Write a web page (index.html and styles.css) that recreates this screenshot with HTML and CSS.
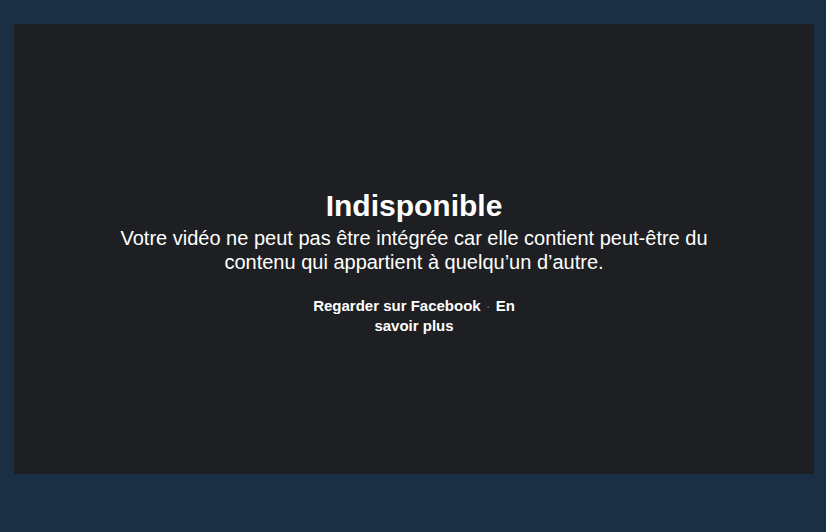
FILE: index.html
```html
<!DOCTYPE html>
<html lang="fr">
<head>
  <meta charset="UTF-8">
  <meta name="viewport" content="width=device-width, initial-scale=1.0">
  <title>Indisponible</title>
  <link rel="stylesheet" href="styles.css">
</head>
<body>
  <div class="player">
    <div class="message">
      <div class="title">Indisponible</div>
      <div class="text">Votre vidéo ne peut pas être intégrée car elle contient peut-être du contenu qui appartient à quelqu’un d’autre.</div>
      <div class="links">
        <a href="#">Regarder sur Facebook</a><span class="dot">·</span><a href="#">En savoir plus</a>
      </div>
    </div>
  </div>
</body>
</html>
```

FILE: styles.css
```css
body {
  margin: 0;
  height: 100vh;
  background-color: #1b2f44;
  font-family: 'Liberation Sans', Arial, sans-serif;
  padding: 24px 12px 0 14px;
  box-sizing: border-box;
}

.player {
  width: 800px;
  height: 450px;
  background: #1e1f22;
  display: flex;
  justify-content: center;
  align-items: center;
  color: #fff;
  text-align: center;
}

.message {
  padding-top: 27px;
  display: flex;
  flex-direction: column;
  align-items: center;
}

.title {
  font-size: 30px;
  font-weight: bold;
  line-height: 34px;
  margin-bottom: 3px;
}

.text {
  font-size: 20px;
  line-height: 24px;
  max-width: 600px;
}

.links {
  width: 220px;
  margin-top: 22px;
  font-size: 15px;
  font-weight: bold;
  line-height: 20px;
}

.links a {
  color: #fff;
  text-decoration: none;
}

.dot {
  color: #6b6e73;
  font-weight: normal;
  margin: 0 5px;
}
```
